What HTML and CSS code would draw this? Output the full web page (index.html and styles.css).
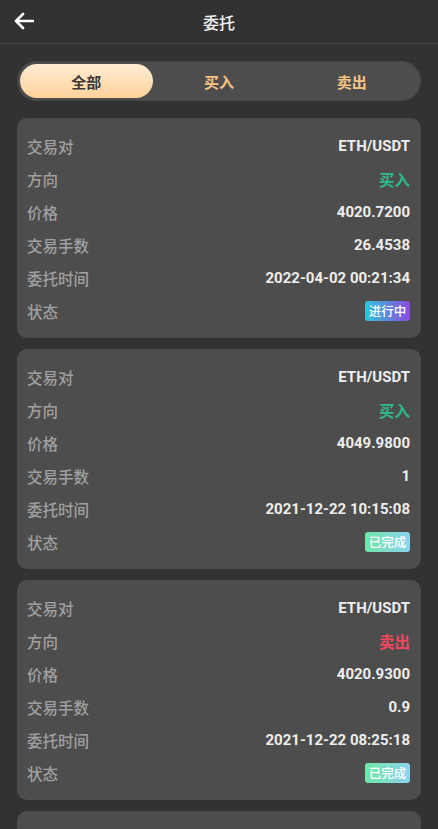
FILE: index.html
```html
<!DOCTYPE html>
<html lang="zh">
<head>
<meta charset="utf-8">
<link rel="stylesheet" href="styles.css">
</head>
<body>
<header class="header">
  <span class="back">
    <svg width="20" height="18" viewBox="0 0 20 18"><path d="M9 2 L2 9 L9 16 M2 9 H19" fill="none" stroke="#fff" stroke-width="2.6" stroke-linecap="round" stroke-linejoin="round"/></svg>
  </span>
  <h1 class="title">委托</h1>
</header>
<main class="main">
  <nav class="tabs">
    <div class="tab active">全部</div>
    <div class="tab">买入</div>
    <div class="tab">卖出</div>
  </nav>
  <section class="card">
    <div class="row"><span class="label">交易对</span><span class="value">ETH/USDT</span></div>
    <div class="row"><span class="label">方向</span><span class="value buy">买入</span></div>
    <div class="row"><span class="label">价格</span><span class="value">4020.7200</span></div>
    <div class="row"><span class="label">交易手数</span><span class="value">26.4538</span></div>
    <div class="row"><span class="label">委托时间</span><span class="value">2022-04-02 00:21:34</span></div>
    <div class="row"><span class="label">状态</span><span class="badge progress">进行中</span></div>
  </section>
  <section class="card">
    <div class="row"><span class="label">交易对</span><span class="value">ETH/USDT</span></div>
    <div class="row"><span class="label">方向</span><span class="value buy">买入</span></div>
    <div class="row"><span class="label">价格</span><span class="value">4049.9800</span></div>
    <div class="row"><span class="label">交易手数</span><span class="value">1</span></div>
    <div class="row"><span class="label">委托时间</span><span class="value">2021-12-22 10:15:08</span></div>
    <div class="row"><span class="label">状态</span><span class="badge done">已完成</span></div>
  </section>
  <section class="card">
    <div class="row"><span class="label">交易对</span><span class="value">ETH/USDT</span></div>
    <div class="row"><span class="label">方向</span><span class="value sell">卖出</span></div>
    <div class="row"><span class="label">价格</span><span class="value">4020.9300</span></div>
    <div class="row"><span class="label">交易手数</span><span class="value">0.9</span></div>
    <div class="row"><span class="label">委托时间</span><span class="value">2021-12-22 08:25:18</span></div>
    <div class="row"><span class="label">状态</span><span class="badge done">已完成</span></div>
  </section>
  <section class="card card-peek"></section>
</main>
</body>
</html>
```
FILE: styles.css
```css
* { box-sizing: border-box; }
html, body { margin: 0; padding: 0; }
body {
  background: #323232;
  font-family: "Noto Sans CJK SC", "Noto Sans", sans-serif;
  color: #fff;
  width: 438px;
  height: 829px;
  overflow: hidden;
}
.header {
  height: 44px;
  border-bottom: 1px solid #444;
  display: flex;
  align-items: center;
  justify-content: center;
  position: relative;
}
.back {
  position: absolute;
  left: 14px;
  top: 12px;
  display: flex;
}
.title {
  margin: 0;
  font-size: 16px;
  font-weight: 500;
  color: #f2f2f2;
  line-height: 1;
}
.main {
  padding: 17px 17px 0;
  display: flex;
  flex-direction: column;
  gap: 11px;
}
.tabs {
  height: 40px;
  border-radius: 20px;
  background: #4d4d4d;
  padding: 3px;
  display: flex;
  margin-bottom: 6px;
  box-shadow: inset 0 0 0 1px #454545;
}
.tab {
  flex: 1;
  display: flex;
  align-items: center;
  justify-content: center;
  font-size: 15px;
  font-weight: 700;
  color: #f6c384;
  border-radius: 17px;
}
.tab.active {
  background: linear-gradient(180deg, #ffecd2 0%, #ffd29a 100%);
  color: #3a3a3a;
}
.card {
  background: #4d4d4d;
  border-radius: 10px;
  padding: 11px 11px 11px 10px;
  display: flex;
  flex-direction: column;
  flex-shrink: 0;
}
.card-peek {
  height: 40px;
}
.row {
  height: 33px;
  display: flex;
  align-items: center;
  justify-content: space-between;
}
.label {
  font-size: 15.5px;
  color: #a0a0a0;
  font-weight: 500;
}
.value {
  font-family: "Roboto", "Noto Sans CJK SC", sans-serif;
  font-size: 15px;
  font-weight: 700;
  color: #eeeeee;
}
.value.buy {
  font-family: "Noto Sans CJK SC", sans-serif;
  font-size: 15.5px;
  color: #2fb98a;
}
.value.sell {
  font-family: "Noto Sans CJK SC", sans-serif;
  font-size: 15.5px;
  color: #f2475d;
}
.badge {
  height: 20px;
  width: 45px;
  border-radius: 3px;
  font-size: 12.5px;
  font-weight: 500;
  color: #fff;
  display: flex;
  align-items: center;
  justify-content: center;
}
.badge.progress {
  background: linear-gradient(90deg, #30c6d9 0%, #8b4be0 100%);
}
.badge.done {
  background: linear-gradient(90deg, #6fe7a6 0%, #8cd2f0 100%);
}
```
